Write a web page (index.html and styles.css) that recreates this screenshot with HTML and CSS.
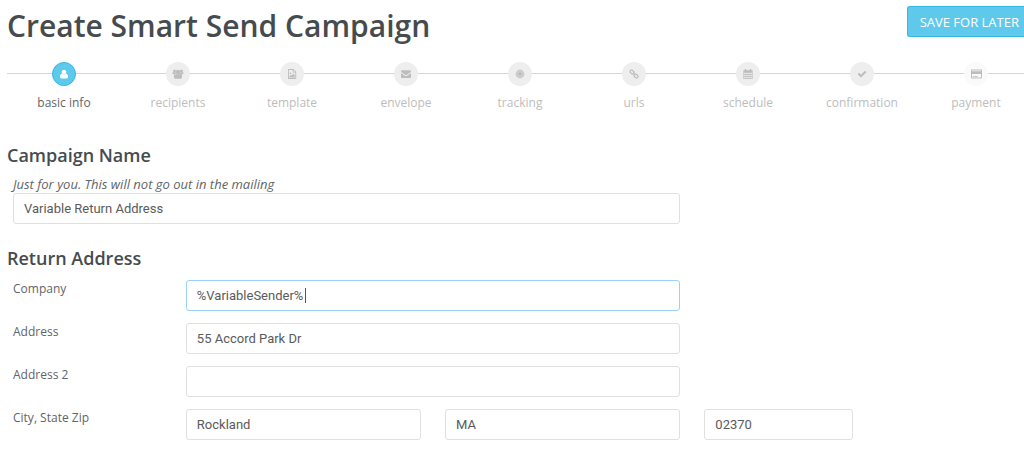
FILE: index.html
```html
<!DOCTYPE html>
<html lang="en">
<head>
    <meta charset="UTF-8">
    <title>Create Smart Send Campaign</title>
    <link rel="stylesheet" href="styles.css">
</head>
<body>

    <div class="header">
        <h1>Create Smart Send Campaign</h1>
        <button type="button" class="save">SAVE FOR LATER</button>
    </div>

    <ol class="steps">
        <li class="step active">
            <span class="dot">
                <svg viewBox="0 0 10 10"><circle cx="5" cy="3" r="2.3"/><path d="M2.9 4.6C1.8 5 1 6.3 1 7.8c0 1 .6 1.6 1.5 1.6h5c.9 0 1.5-.6 1.5-1.6 0-1.5-.8-2.8-1.9-3.2C6.5 5.3 5.8 5.6 5 5.6s-1.5-.3-2.1-1z"/></svg>
            </span>
            <span>basic info</span>
        </li>
        <li class="step">
            <span class="dot">
                <svg viewBox="0 0 12 10"><circle cx="2.5" cy="1.9" r="1.5"/><circle cx="9.5" cy="1.9" r="1.5"/><circle cx="6" cy="3.1" r="2.3"/><path d="M.6 3.2h3c0 1 .4 1.7 1 2.2H2.2C1.100 5.400.4 4.900.4 4zM11.400 3.200h-3c0 1-.4 1.700-1 2.200h2.400c1.100 0 1.800-.5 1.800-1.400zM4 4.600C2.600 4.900 1.900 6.400 1.900 8c0 1 .7 1.800 1.800 1.800h4.600c1.100 0 1.800-.8 1.800-1.800 0-1.600-.7-3.100-2.100-3.400-.6.500-1.200.8-2 .8s-1.400-.3-2-.8z"/></svg>
            </span>
            <span>recipients</span>
        </li>
        <li class="step">
            <span class="dot">
                <svg viewBox="0 0 10 10"><path fill-rule="evenodd" d="M1 0h5.500L9.200 2.700V10H1zM1.900.9v8.200h6.400V3.600H5.700V.9zM6.500 1.100v1.700h1.700z"/><circle cx="3.5" cy="4.3" r=".9"/><path d="M2.500 8.400V7l1-1 .8.8 2-2 1.400 1.400v2.200z"/></svg>
            </span>
            <span>template</span>
        </li>
        <li class="step">
            <span class="dot">
                <svg viewBox="0 0 10 10"><path d="M0 2.200c0-.6.4-1 1-1h8c.6 0 1 .4 1 1 0 .5-.4 1-.9 1.400L6 5.800c-.7.500-1.300.5-2 0L.9 3.600C.4 3.200 0 2.700 0 2.200zM0 4l3.500 2.500c1 .7 2 .7 3 0L10 4v4.100c0 .6-.4 1-1 1H1c-.6 0-1-.4-1-1z"/></svg>
            </span>
            <span>envelope</span>
        </li>
        <li class="step">
            <span class="dot">
                <svg viewBox="0 0 10 10"><circle cx="5" cy="5" r="4.4" fill-opacity=".7"/><circle cx="5" cy="5" r="1.5"/></svg>
            </span>
            <span>tracking</span>
        </li>
        <li class="step">
            <span class="dot">
                <svg viewBox="0 0 10 10"><g class="link"><rect x="-2.1" y="-1.5" width="4.2" height="3" rx="1.3" transform="translate(3 3) rotate(45)"/><rect x="-2.1" y="-1.5" width="4.2" height="3" rx="1.3" transform="translate(7 7) rotate(45)"/><path d="M3.8 3.8l2.4 2.4"/></g></svg>
            </span>
            <span>urls</span>
        </li>
        <li class="step">
            <span class="dot">
                <svg viewBox="0 0 10 10"><path fill-rule="evenodd" d="M.4 1.300h1.400V0h1.500v1.300h3.400V0h1.500v1.300h1.400V10H.4zM1.100 3.700v1.400h1.500V3.700zM3.100 3.700v1.400h1.600V3.700zM5.300 3.700v1.400h1.600V3.700zM7.400 3.700v1.400h1.500V3.700zM1.100 5.700v1.400h1.500V5.700zM3.100 5.700v1.400h1.600V5.700zM5.300 5.700v1.400h1.600V5.700zM7.400 5.700v1.400h1.500V5.700zM1.100 7.700v1.500h1.500V7.700zM3.100 7.700v1.500h1.600V7.700zM5.300 7.700v1.500h1.600V7.700zM7.400 7.700v1.500h1.500V7.700z"/></svg>
            </span>
            <span>schedule</span>
        </li>
        <li class="step">
            <span class="dot">
                <svg viewBox="0 0 10 10"><path d="M.6 5.200L2 3.800l2 2 4-4 1.400 1.400L4 8.600z"/></svg>
            </span>
            <span>confirmation</span>
        </li>
        <li class="step last">
            <span class="dot">
                <svg viewBox="0 0 11 10"><path fill-rule="evenodd" d="M1 .5h9c.6 0 1 .4 1 1v7c0 .6-.4 1-1 1H1c-.6 0-1-.4-1-1v-7c0-.6.4-1 1-1zM1 1.500v.8h9v-.8zM1 5v3.500h9V5zM2 7h1.500v1H2zM4 7h2.500v1H4z"/></svg>
            </span>
            <span>payment</span>
        </li>
    </ol>

    <form class="form">
        <h2>Campaign Name</h2>
        <div class="row">
            <div class="col-8">
                <label class="hint" for="name">Just for you. This will not go out in the mailing</label>
                <input type="text" id="name" value="Variable Return Address">
            </div>
        </div>

        <h2>Return Address</h2>
        <div class="row">
            <label class="col-2" for="company">Company</label>
            <div class="col-6 editing">
                <input type="text" id="company" value="%VariableSender%">
                <span class="caret"></span>
            </div>
        </div>
        <div class="row">
            <label class="col-2" for="address">Address</label>
            <input class="col-6" type="text" id="address" value="55 Accord Park Dr">
        </div>
        <div class="row">
            <label class="col-2" for="address2">Address 2</label>
            <input class="col-6" type="text" id="address2">
        </div>
        <div class="row">
            <label class="col-2" for="city">City, State Zip</label>
            <input class="col-3" type="text" id="city" value="Rockland">
            <input class="col-3" type="text" aria-label="State" value="MA">
            <input class="col-2" type="text" aria-label="Zip" value="02370">
        </div>
    </form>

</body>
</html>
```
FILE: styles.css
```css
*{
    box-sizing: border-box;
    padding: 0;
    margin: 0;
}
body{
    padding-left: 7px;
    font: 12px/20px "Open Sans", "Noto Sans", sans-serif;
    color: #5f6467;
    background-color: #fff;
    overflow: hidden;
}
h1, h2{
    color: #464b4e;
    font-weight: 600;
}
h1{
    font-size: 30px;
    line-height: 40px;
}
h2{
    font-size: 18px;
    line-height: 24px;
}

/* header */
.header{
    display: flex;
    justify-content: space-between;
    align-items: flex-start;
    padding-top: 6px;
}
.save{
    height: 31px;
    padding: 0 5px 0 12px;
    border: 1px solid #35b8e8;
    border-right: 0;
    border-radius: 3px 0 0 3px;
    background-color: #5fc9ec;
    color: #fff;
    font: 13px/20px "Open Sans", "Noto Sans", sans-serif;
}

/* steps */
.steps{
    display: flex;
    margin: 16px -9px 0 0;
    list-style: none;
    /* line behind the circles */
    background: linear-gradient(#d5d5d5, #d5d5d5) 0 11px / 100% 1px no-repeat;
}
.step{
    flex: 1;
    display: flex;
    flex-direction: column;
    align-items: center;
    gap: 7px;
    color: #bdbdbd;
}
.dot{
    display: flex;
    align-items: center;
    justify-content: center;
    width: 24px;
    height: 24px;
    border-radius: 50%;
    background-color: #eee;
}
.dot svg{
    height: 10px;
    fill: #bdbdbd;
}
.dot .link{
    fill: none;
    stroke: #bdbdbd;
    stroke-width: 1.2;
}
.active{
    color: #5f6467;
}
.active .dot{
    border: 1px solid #35b8e8;
    background-color: #5fc9ec;
}
.active .dot svg{
    fill: #fff;
}
.last .dot{
    background-color: #fafafa;
}

/* form */
.form{
    margin-top: 30px;
}
.row{
    display: grid;
    grid-template-columns: repeat(12, 1fr);
    column-gap: 24px;
    margin: 0 -2px 12px 6px;
}
.col-2{
    grid-column: span 2;
}
.col-3{
    grid-column: span 3;
}
.col-6{
    grid-column: span 6;
}
.col-8{
    grid-column: span 8;
}
label{
    line-height: 17px;
}
.hint{
    display: block;
    padding-top: 9px;
    font-size: 13px;
    font-style: italic;
}
.row + h2{
    margin: 22px 0 10px;
}
input{
    display: block;
    width: 100%;
    min-width: 0;
    height: 31px;
    padding: 0 10px;
    border: 1px solid #e0e0e0;
    border-radius: 3px;
    outline: none;
    background-color: #fff;
    color: #5a5a5a;
    font: 13px/20px Roboto, "Open Sans", sans-serif;
}

/* field being edited, with its text cursor */
.editing{
    position: relative;
}
.editing input{
    border-color: #9bd0fb;
}
.caret{
    position: absolute;
    top: 8px;
    left: 119px;
    width: 1px;
    height: 15px;
    background-color: #555;
}
```
